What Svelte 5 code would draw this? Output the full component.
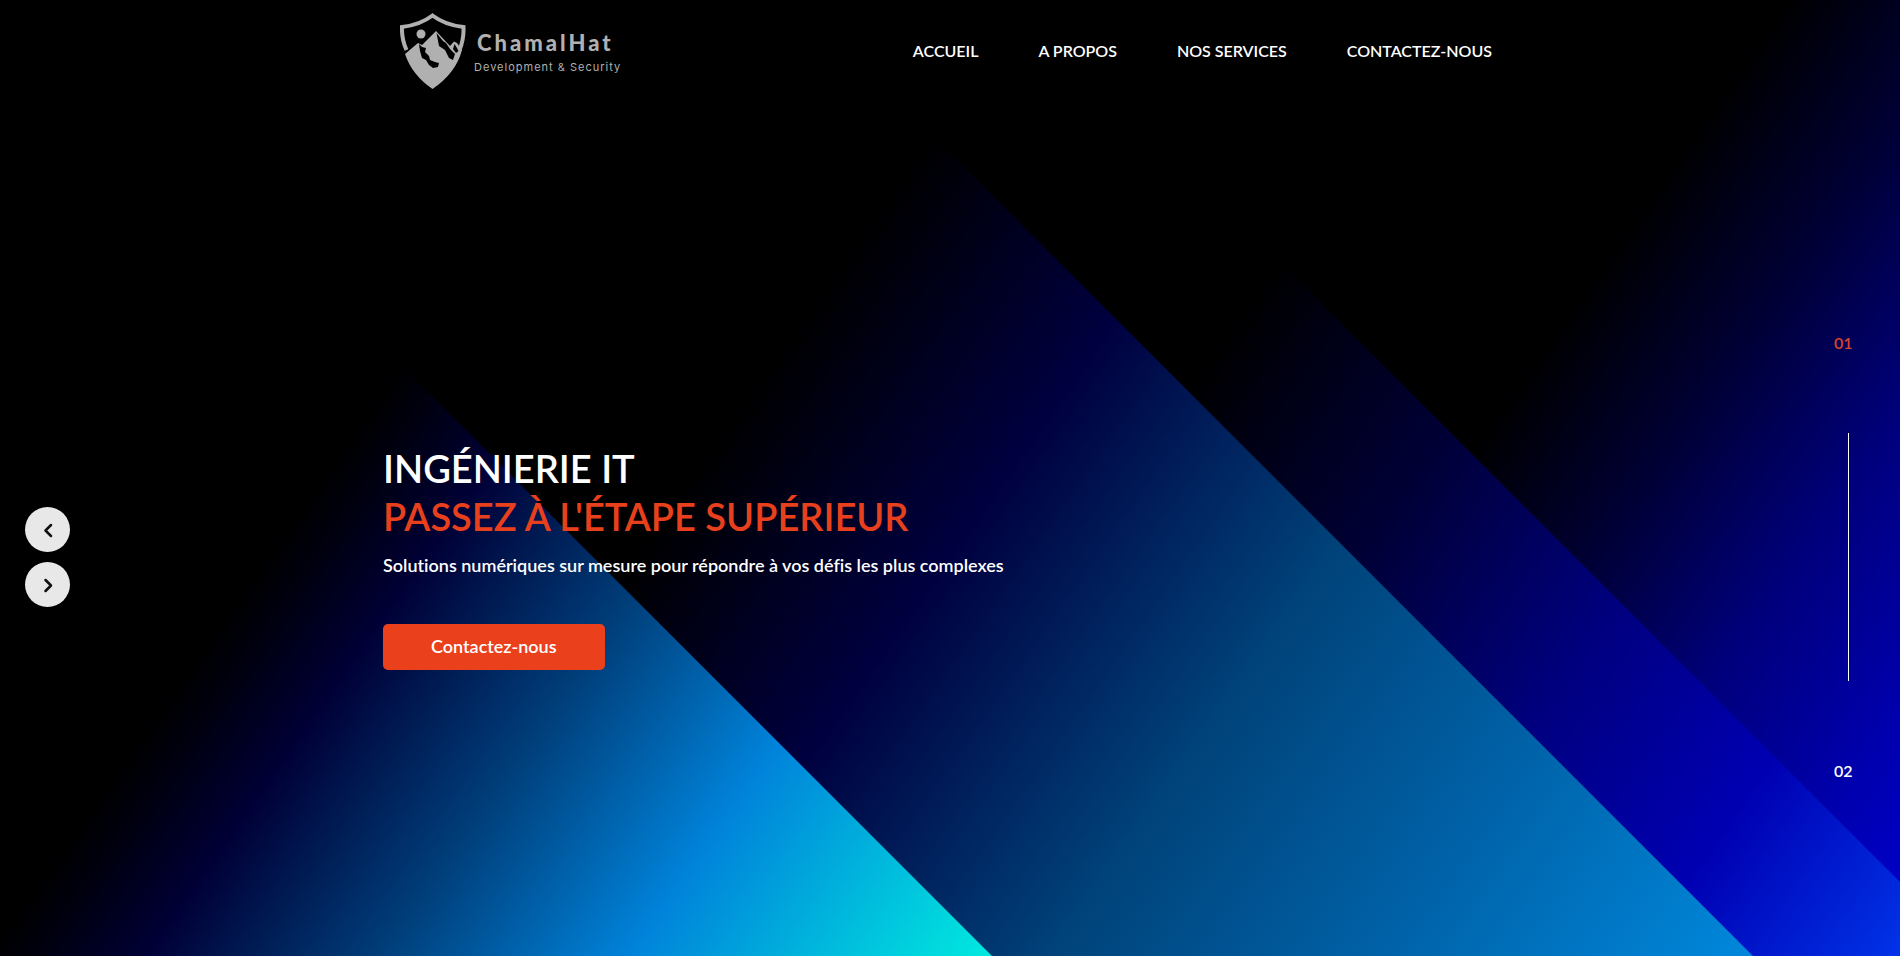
<script>
  const links = ['ACCUEIL', 'A PROPOS', 'NOS SERVICES', 'CONTACTEZ-NOUS'];
  const slides = ['01', '02'];
  let current = $state(0);
  const move = (step) => (current = (current + step + slides.length) % slides.length);
</script>

<div class="page">
  <svg class="backdrop" viewBox="0 0 1900 956" preserveAspectRatio="xMidYMid slice" aria-hidden="true">
    <defs>
      <linearGradient id="far" gradientUnits="userSpaceOnUse" x1="1196" y1="838" x2="1721" y2="1206">
        <stop offset="0" stop-color="#000000" />
        <stop offset="0.25" stop-color="#000034" />
        <stop offset="0.52" stop-color="#00007c" />
        <stop offset="0.8" stop-color="#0000b0" />
        <stop offset="1" stop-color="#0000cf" />
      </linearGradient>
      <linearGradient id="ridge" gradientUnits="userSpaceOnUse" x1="979" y1="686" x2="1724" y2="1208">
        <stop offset="0" stop-color="#000000" />
        <stop offset="0.07" stop-color="#000010" />
        <stop offset="0.26" stop-color="#000036" />
        <stop offset="0.52" stop-color="#00007e" />
        <stop offset="0.76" stop-color="#0000b2" />
        <stop offset="1" stop-color="#0033e8" />
      </linearGradient>
      <linearGradient id="middle" gradientUnits="userSpaceOnUse" x1="687" y1="481" x2="1605" y2="1124">
        <stop offset="0" stop-color="#000000" />
        <stop offset="0.05" stop-color="#00000e" />
        <stop offset="0.23" stop-color="#000040" />
        <stop offset="0.51" stop-color="#00437a" />
        <stop offset="0.75" stop-color="#0062a8" />
        <stop offset="1" stop-color="#0085d8" />
      </linearGradient>
      <linearGradient id="near" gradientUnits="userSpaceOnUse" x1="438" y1="307" x2="1115" y2="781">
        <stop offset="0" stop-color="#000000" />
        <stop offset="0.05" stop-color="#00000e" />
        <stop offset="0.16" stop-color="#000036" />
        <stop offset="0.4" stop-color="#00407c" />
        <stop offset="0.64" stop-color="#0083da" />
        <stop offset="1" stop-color="#00eadf" />
      </linearGradient>
    </defs>
    <rect width="1900" height="956" fill="url(#far)" />
    <path d="M0 0H1018L1974 956H0Z" fill="url(#ridge)" />
    <path d="M0 0H797L1753 956H0Z" fill="url(#middle)" />
    <path d="M0 0H36L992 956H0Z" fill="url(#near)" />
  </svg>

  <header>
    <a class="brand" href="#accueil">
      <svg class="shield" viewBox="0 0 66 76" aria-hidden="true">
        <path
          d="M6.500 37Q1.500 26 2 14Q20 12 32.500 2.500Q45 12 63.500 14Q64 26 59.500 37"
          fill="none"
          stroke="#b0b0b0"
          stroke-width="4"
          stroke-linejoin="miter"
        />
        <circle cx="21" cy="21" r="4.500" fill="#b0b0b0" />
        <path d="M5 41L18 30L22 32L36 18L50 33L54 28.500L57 30L62 37Q56 60 32.500 76Q12 62 5 41Z" fill="#b0b0b0" />
        <path
          d="M19 31L22 34L26 35L25 39L29 43L30 47L35 49L39 50L38 54L33 55L29 52L26 47L22 45L20 38Z
          M36.500 20L43 28L46 30L50 36L55 41L53 47L49 45L45 37L39 33Z
          M54.500 31L53 36L56 40L58.500 38L57 35Z"
          fill="#000"
        />
      </svg>
      <span class="wordmark">
        <strong>ChamalHat</strong>
        <small>Development &amp; Security</small>
      </span>
    </a>
    <nav aria-label="Navigation principale">
      {#each links as link}
        <a href="#{link.toLowerCase().replace(' ', '-')}">{link}</a>
      {/each}
    </nav>
  </header>

  <main>
    <div class="arrows">
      <button type="button" aria-label="Précédent" onclick={() => move(-1)}>
        <svg viewBox="0 0 16 16"><path d="M11 3L5.500 8.500L11 14" /></svg>
      </button>
      <button type="button" aria-label="Suivant" onclick={() => move(1)}>
        <svg viewBox="0 0 16 16"><path d="M5.500 3L11 8.500L5.500 14" /></svg>
      </button>
    </div>

    <section class="hero">
      <h1>INGÉNIERIE IT<br /><span>PASSEZ À L'ÉTAPE SUPÉRIEUR</span></h1>
      <p>Solutions numériques sur mesure pour répondre à vos défis les plus complexes</p>
      <a class="cta" href="#contact">Contactez-nous</a>
    </section>

    <div class="pager">
      {#each slides as slide, i}
        {#if i > 0}<span class="line"></span>{/if}
        <button type="button" class:active={current === i} onclick={() => (current = i)}>{slide}</button>
      {/each}
    </div>
  </main>
</div>

<style>
  :global(body) {
    margin: 0;
    background: #000;
  }

  .page {
    position: relative;
    display: flex;
    flex-direction: column;
    min-height: 100vh;
    overflow: hidden;
    color: #fff;
    font-family: Lato, 'Open Sans', sans-serif;
    font-size: 16px;
    font-weight: 600;
    font-variant-ligatures: none;
  }

  .backdrop {
    position: absolute;
    inset: 0;
    width: 100%;
    height: 100%;
  }

  header {
    position: relative;
    display: flex;
    align-items: center;
    justify-content: space-between;
    width: 1092px;
    max-width: 90%;
    height: 102px;
    margin: 0 auto;
    padding-right: 4px;
    box-sizing: border-box;
  }

  .brand {
    display: flex;
    align-items: center;
    gap: 8px;
    margin-left: -4px;
    color: #b0b0b0;
    text-decoration: none;
  }

  .shield {
    width: 66px;
    height: 76px;
  }

  .wordmark {
    display: flex;
    flex-direction: column;
    gap: 6px;
    padding-top: 4px;
  }

  .wordmark strong {
    padding-left: 3px;
    font-family: Lato, sans-serif;
    font-size: 22px;
    font-weight: 900;
    line-height: 22px;
    letter-spacing: 3px;
  }

  .wordmark small {
    font-family: Inter, sans-serif;
    font-size: 11px;
    font-weight: 400;
    line-height: 14px;
    letter-spacing: 1px;
  }

  nav {
    display: flex;
    gap: 60px;
  }

  nav a {
    color: #fff;
    line-height: 24px;
    text-decoration: none;
  }

  main {
    position: relative;
    flex: 1;
    display: grid;
    grid-template-columns: 383px 1fr 66px;
    align-items: center;
  }

  .arrows {
    display: grid;
    gap: 10px;
    padding: 56px 0 0 25px;
  }

  .arrows button {
    display: grid;
    place-items: center;
    width: 45px;
    height: 45px;
    padding: 0;
    border: 0;
    border-radius: 50%;
    background: #e8e8e8;
    cursor: pointer;
  }

  .arrows svg {
    width: 16px;
    height: 16px;
    fill: none;
    stroke: #111;
    stroke-width: 2.5;
    stroke-linecap: round;
    stroke-linejoin: round;
  }

  .hero {
    padding-top: 56px;
  }

  h1 {
    margin: 0;
    font-size: 38px;
    font-weight: 600;
    line-height: 48px;
  }

  h1 span {
    color: #e8401c;
  }

  p {
    margin: 12px 0 46px;
    font-size: 18px;
    line-height: 26px;
  }

  .cta {
    display: inline-block;
    padding: 9px 48px 11px;
    border-radius: 5px;
    background: #ea401b;
    color: #fff;
    font-size: 18px;
    line-height: 26px;
    text-decoration: none;
  }

  .pager {
    display: flex;
    flex-direction: column;
    align-items: flex-start;
    gap: 78px;
    padding-top: 56px;
  }

  .pager button {
    padding: 0;
    border: 0;
    background: none;
    color: #fff;
    font: inherit;
    line-height: 24px;
    cursor: pointer;
  }

  .pager button.active {
    color: #d9432b;
  }

  .line {
    width: 1px;
    height: 248px;
    margin-left: 14px;
    background: #fff;
  }
</style>
